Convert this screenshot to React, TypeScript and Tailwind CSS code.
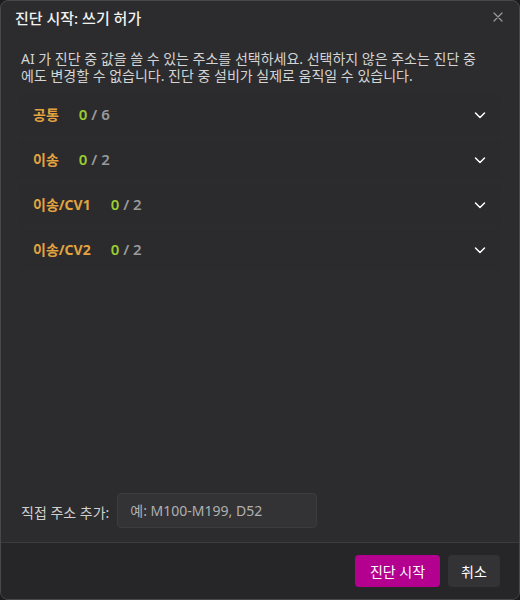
import React from "react";

const font = { fontFamily: '"Noto Sans", "Noto Sans CJK KR", sans-serif' };

function Chevron() {
  return (
    <svg width="14" height="14" viewBox="0 0 14 14" fill="none">
      <path d="M2.5 5 L7 9.5 L11.5 5" stroke="#ffffff" strokeWidth="1.5" strokeLinecap="round" strokeLinejoin="round" />
    </svg>
  );
}

const rows = [
  { label: "공통", n: 0, total: 6 },
  { label: "이송", n: 0, total: 2 },
  { label: "이송/CV1", n: 0, total: 2 },
  { label: "이송/CV2", n: 0, total: 2 },
];

export default function App() {
  return (
    <div className="w-[520px] h-[600px] bg-[#1c1c1e]" style={font}>
      <div className="w-full h-full flex flex-col bg-[#2c2c2e] border border-[#48484a] rounded-lg overflow-hidden">
        <div className="h-[34px] flex items-center justify-between pl-[14px] pr-[16px]">
          <div className="text-[15px] font-medium text-[#f2f2f2] leading-none">진단 시작: 쓰기 허가</div>
          <svg width="10" height="10" viewBox="0 0 10 10" className="mt-[-2px]">
            <path d="M1 1 L9 9 M9 1 L1 9" stroke="#9a9a9c" strokeWidth="1.2" strokeLinecap="round" />
          </svg>
        </div>
        <div className="px-5 pt-[15px] text-[14px] leading-[17px] text-[#d4d4d4]">
          AI 가 진단 중 값을 쓸 수 있는 주소를 선택하세요. 선택하지 않은 주소는 진단 중
          <br />
          에도 변경할 수 없습니다. 진단 중 설비가 실제로 움직일 수 있습니다.
        </div>
        <div className="mt-[10px] px-[18px] flex flex-col gap-1">
          {rows.map((r) => (
            <div key={r.label} className="h-[41px] flex items-center justify-between pl-[14px] pr-[14px] bg-[#2b2b2d] rounded">
              <div className="flex items-center gap-5 font-bold leading-none">
                <span className="text-[14px] text-[#e3a43f]">{r.label}</span>
                <span className="text-[15px] font-semibold">
                  <span className="text-[#9ccc33]">{r.n}</span>
                  <span className="text-[#9a9a9c]"> / {r.total}</span>
                </span>
              </div>
              <Chevron />
            </div>
          ))}
        </div>
        <div className="flex-1" />
        <div className="flex items-center gap-2 px-5 pb-[14px]">
          <span className="text-[14px] text-[#d0d0d0] mt-[3px]">직접 주소 추가:</span>
          <div className="w-[200px] h-[35px] flex items-center px-3 bg-[#333335] border border-[#3c3c3e] rounded text-[14px] text-[#b0b0b0]">
            예: M100-M199, D52
          </div>
        </div>
        <div className="h-[57px] border-t border-[#3c3c3e] bg-[#262628] flex items-start justify-end gap-2 pt-[12px] pr-[19px]">
          <button className="h-[32px] w-[85px] rounded bg-[#b3008e] text-white text-[14px]">진단 시작</button>
          <button className="h-[32px] w-[52px] rounded bg-[#333335] text-white text-[14px]">취소</button>
        </div>
      </div>
    </div>
  );
}
